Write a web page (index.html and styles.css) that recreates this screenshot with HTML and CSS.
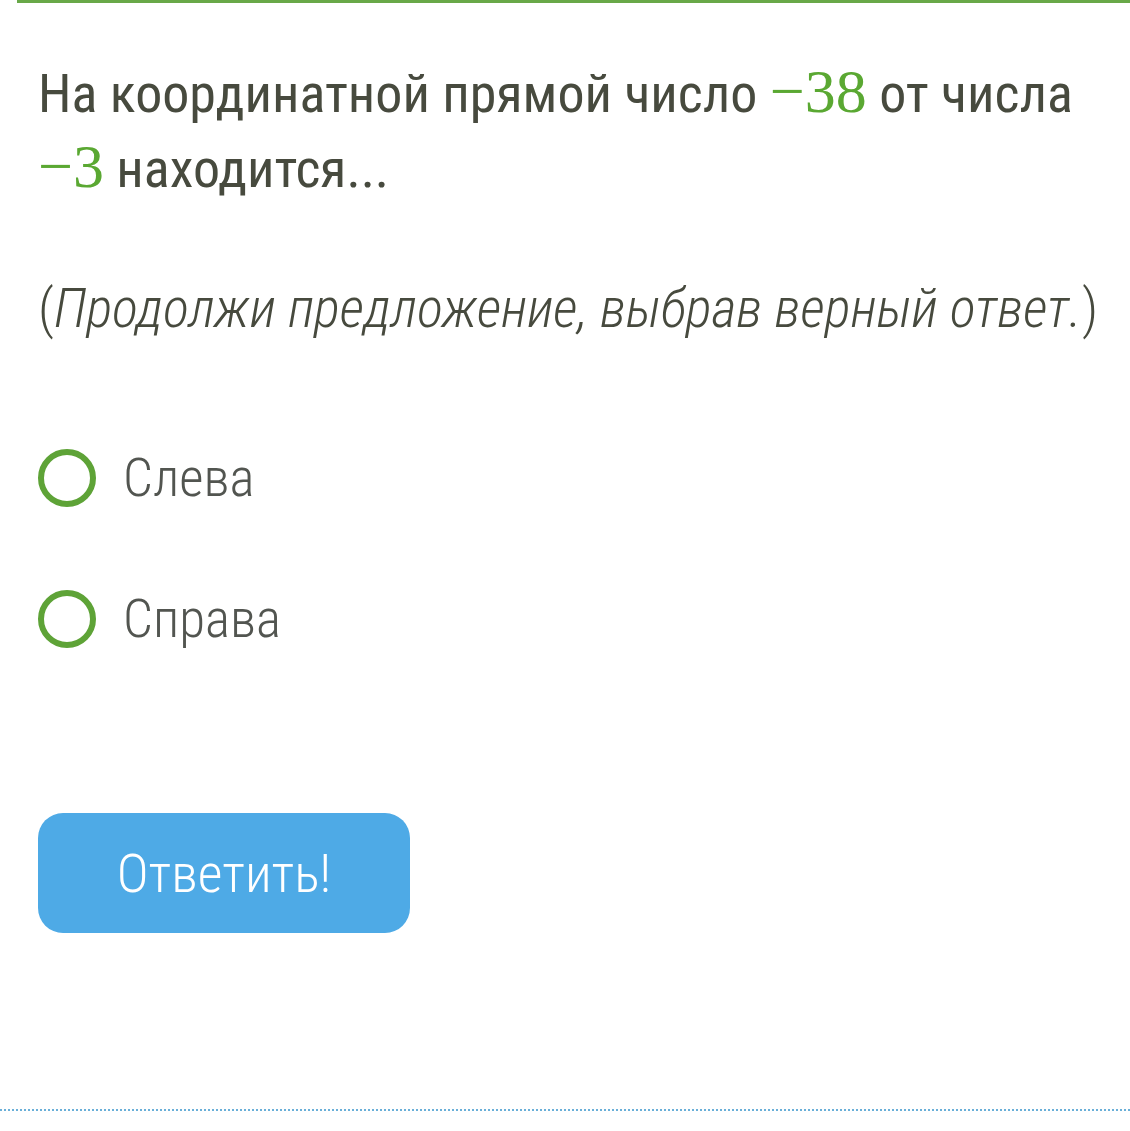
FILE: index.html
```html
<!DOCTYPE html>
<html lang="ru">
<head>
<meta charset="utf-8">
<link rel="stylesheet" href="styles.css">
</head>
<body>
<div class="page">
  <div class="topline"></div>
  <div class="content">
    <p class="question">На координатной прямой число <span class="math">−38</span> от числа <span class="math">−3</span> находится...</p>
    <p class="hint">(<i>Продолжи предложение, выбрав верный ответ.</i>)</p>
    <div class="options">
      <label class="option"><span class="radio"></span><span class="opt-text">Слева</span></label>
      <label class="option"><span class="radio"></span><span class="opt-text">Справа</span></label>
    </div>
    <button class="submit">Ответить!</button>
  </div>
  <div class="dotline"></div>
</div>
</body>
</html>
```
FILE: styles.css
```css
html, body {
  margin: 0;
  padding: 0;
  background: #fff;
}
body {
  font-family: "Roboto Condensed", Roboto, sans-serif;
  font-stretch: condensed;
  color: #474a3e;
}
.page {
  width: 1130px;
  height: 1131px;
  position: relative;
  overflow: hidden;
}
.topline {
  margin-left: 17px;
  height: 3px;
  background: #68a848;
}
.content {
  padding: 0 20px 0 38px;
}
.question {
  margin: 52px 0 0;
  max-width: 1060px;
  font-size: 54px;
  line-height: 73px;
  font-weight: 400;
}
.math {
  font-family: "Liberation Serif", "Times New Roman", serif;
  color: #5aa832;
  font-weight: 400;
  font-size: 62px;
}
.hint {
  margin: 73px 0 0;
  font-size: 54.5px;
  font-weight: 300;
  line-height: 60px;
}
.options {
  margin-top: 110px;
  display: flex;
  flex-direction: column;
  gap: 82px;
}
.option {
  display: flex;
  align-items: center;
  gap: 27px;
  height: 59px;
}
.radio {
  width: 46px;
  height: 46px;
  border: 6px solid #5ea337;
  border-radius: 50%;
  flex: none;
}
.opt-text {
  font-size: 53px;
  font-weight: 300;
  color: #525550;
}
.submit {
  margin-top: 165px;
  width: 372px;
  height: 120px;
  border: none;
  border-radius: 25px;
  background: #4eaae6;
  color: #fff;
  font-family: "Roboto Condensed", Roboto, sans-serif;
  font-stretch: condensed;
  font-size: 54px;
  font-weight: 300;
  cursor: pointer;
}
.dotline {
  position: absolute;
  left: 0;
  right: 0;
  top: 1109px;
  border-top: 2px dotted #6aafd8;
}
```
